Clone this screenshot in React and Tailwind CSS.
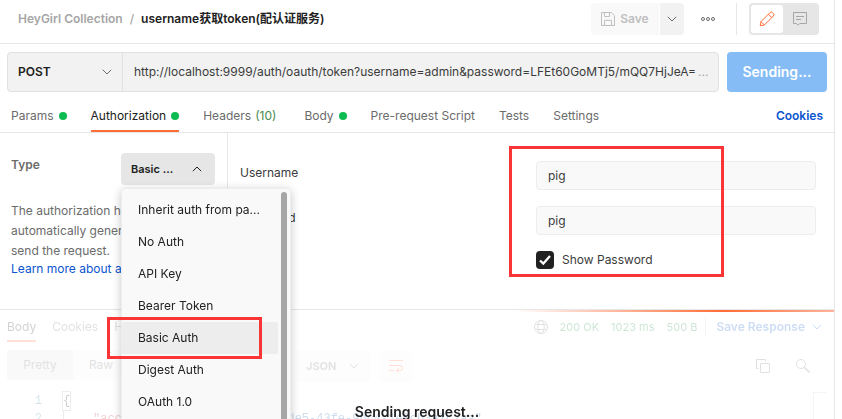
import React from "react";

const authTypes = [
  "Inherit auth from pa...",
  "No Auth",
  "API Key",
  "Bearer Token",
  "Basic Auth",
  "Digest Auth",
  "OAuth 1.0",
];

function Chevron({ up = false, className = "" }) {
  return (
    <svg viewBox="0 0 10 6" width="10" height="6" fill="none" stroke="currentColor" className={"pointer-events-none shrink-0 " + className} aria-hidden="true">
      <path d={up ? "M0.8 5.2 5 1l4.2 4.2" : "M0.8 0.8 5 5 9.2 0.8"} />
    </svg>
  );
}

function Dot() {
  return <span className="h-2 w-2 rounded-full bg-[#0cbb52]" />;
}

function Header() {
  return (
    <header className="flex h-11 shrink-0 items-start border-b border-[#e6e6e6] pt-[3px] pr-[15px] pl-[18px] font-semibold">
      <nav aria-label="Breadcrumb" className="flex h-8 flex-1 items-center gap-[7px] text-[#a6a6a6]">
        <a href="#collection">HeyGirl Collection</a>
        <span className="font-medium">/</span>
        <span className="text-[#212121]">username获取token(配认证服务)</span>
      </nav>
      <div className="flex h-8 items-center">
        <button type="button" disabled className="flex h-8 w-[68px] items-center justify-center gap-[5px] rounded-l bg-[#f9f9f9] text-[#bfbfbf]">
          <svg viewBox="0 0 14 14" width="14" height="14" fill="none" stroke="currentColor" aria-hidden="true">
            <path d="M.5.5h9.8l3.2 3.2v9.8H.5zM3.5.5v4h5v-4M3.5 13.5V8.3h7v5.2" />
          </svg>
          Save
        </button>
        <button type="button" aria-label="Save options" className="ml-px flex h-8 w-6 items-center justify-center rounded-r bg-[#f2f2f2] text-[#6b6b6b]">
          <Chevron />
        </button>
        <button type="button" aria-label="More actions" className="ml-[9px] flex h-8 w-[30px] items-center justify-center text-[#6b6b6b]">
          <svg viewBox="0 0 14 4" width="14" height="4" fill="none" stroke="currentColor" aria-hidden="true">
            <circle cx="2" cy="2" r="1.5" />
            <circle cx="7" cy="2" r="1.5" />
            <circle cx="12" cy="2" r="1.5" />
          </svg>
        </button>
        <span className="ml-[13px] h-8 w-px bg-[#e6e6e6]" />
        <div className="ml-3 flex h-8 w-[70px] rounded bg-[#e6e6e6] p-0.5">
          <button type="button" aria-label="Edit" className="flex w-8 items-center justify-center rounded-[3px] bg-white text-[#ff6c37]">
            <svg viewBox="0 0 16 16" width="16" height="16" fill="none" stroke="currentColor" strokeLinejoin="round" aria-hidden="true">
              <path d="M1.2 14.8 2 10.6 11 1.600a1.700 1.700 0 0 1 2.400 0l1 1a1.700 1.700 0 0 1 0 2.400l-9 9zM9.400 3.200l3.400 3.400M2 10.600 5.400 14" />
            </svg>
          </button>
          <button type="button" aria-label="Comments" className="flex flex-1 items-center justify-center text-[#a6a6a6]">
            <svg viewBox="0 0 14 14" width="14" height="14" fill="none" stroke="currentColor" aria-hidden="true">
              <path d="M.5.5h13v11H6.700L5 13.200 3.300 11.500H.5zM3 4.500h8M3 7.500h5" />
            </svg>
          </button>
        </div>
      </div>
    </header>
  );
}

function UrlBar() {
  return (
    <div className="flex shrink-0 gap-2 px-[7px] pt-2">
      <div className="flex h-10 min-w-0 flex-1 rounded border border-[#e1e1e1] bg-[#f2f2f2]">
        <div className="grid w-[115px] shrink-0 items-center border-r border-[#e1e1e1]">
          <select aria-label="Method" className="col-start-1 row-start-1 h-full w-full appearance-none pl-[10px] font-semibold text-[#212121] outline-none">
            <option>POST</option>
            <option>GET</option>
          </select>
          <Chevron className="col-start-1 row-start-1 mr-[10px] justify-self-end text-[#6b6b6b]" />
        </div>
        <input
          aria-label="Request URL"
          className="min-w-0 flex-1 pl-[11px] text-[#3b3b3b] outline-none"
          defaultValue="http://localhost:9999/auth/oauth/token?username=admin&password=LFEt60GoMTj5/mQQ7HjJeA="
        />
        <span className="flex w-5 items-center text-[#a6a6a6]">...</span>
      </div>
      <button type="button" className="h-10 w-[100px] rounded bg-[#85bcf6] text-sm font-semibold text-white">Sending...</button>
    </div>
  );
}

function Tabs() {
  const tab = "flex items-center gap-[5px]";
  return (
    <nav aria-label="Request sections" className="flex h-[41px] shrink-0 items-stretch gap-6 border-b border-[#e6e6e6] pt-2 pr-[11px] pl-[11px] text-[#6b6b6b]">
      <a href="#params" className={tab}>Params <Dot /></a>
      <a href="#authorization" aria-current="page" className="flex items-center gap-[5px] border-b-2 border-[#ff6c37] pt-0.5 text-[#212121]">Authorization <Dot /></a>
      <a href="#headers" className="mr-1 flex items-center gap-1">Headers <span className="text-[#468a4d]">(10)</span></a>
      <a href="#body" className={tab}>Body <Dot /></a>
      <a href="#pre-request" className={tab}>Pre-request Script</a>
      <a href="#tests" className={tab}>Tests</a>
      <a href="#settings" className={tab}>Settings</a>
      <a href="#cookies" className="ml-auto flex items-center font-semibold text-[#0a55cf]">Cookies</a>
    </nav>
  );
}

function AuthMenu() {
  return (
    <div className="absolute top-[35px] left-0 z-20 flex h-80 w-[170px] rounded border border-[#ededed] bg-[#f9f9f9] pt-[5px] shadow-[0_2px_10px_rgba(0,0,0,0.22)]">
      <ul role="listbox" aria-label="Authorization type" className="w-[156px] text-[#212121]">
        {authTypes.map((type) => (
          <li
            key={type}
            role="option"
            aria-selected={type === "Basic Auth"}
            className="flex h-8 items-center pl-4 aria-selected:bg-[#ededed]"
          >
            {type}
          </li>
        ))}
      </ul>
      <span className="-mt-0.5 ml-[3px] h-full w-1.5 rounded-full bg-[#a6a6a6]" />
    </div>
  );
}

function Authorization() {
  const field = "h-[29px] w-[280px] rounded border border-[#ededed] bg-[#f9f9f9] px-[11px] text-[#3b3b3b] outline-none";
  return (
    <section className="flex h-[177px] shrink-0 border-b border-[#e6e6e6]">
      <div className="w-[228px] shrink-0 border-r border-[#e6e6e6] pt-5 pr-3 pl-[11px] text-[#6b6b6b]">
        <div className="flex h-8 justify-between">
          <span id="type-label" className="pt-1 leading-4 font-semibold">Type</span>
          <div className="relative">
            <button type="button" aria-haspopup="listbox" aria-expanded="true" aria-labelledby="type-label" className="flex h-8 w-[94px] items-center justify-between rounded bg-[#e6e6e6] pr-[13px] pl-[10px] text-[11px] font-semibold text-[#212121]">
              Basic ...
              <Chevron up />
            </button>
            <AuthMenu />
          </div>
        </div>
        <p className="mt-4 leading-5">The authorization header will be automatically generated when you send the request.</p>
        <a href="#learn" className="block overflow-hidden leading-4 whitespace-nowrap text-[#0a55cf]">Learn more about authorization</a>
      </div>
      <div className="relative flex-1 pt-7 pr-[18px] pl-3">
        <div className="grid grid-cols-[1fr_280px] gap-y-4 text-[#3b3b3b]">
          <label htmlFor="username" className="pt-1 leading-4">Username</label>
          <input id="username" className={field} defaultValue="pig" />
          <label htmlFor="password" className="pt-1 leading-4">Password</label>
          <input id="password" className={field} defaultValue="pig" />
          <label className="col-start-2 flex h-[18px] items-center gap-2">
            <span className="grid h-[18px] w-[18px] place-items-center">
              <input type="checkbox" defaultChecked className="col-start-1 row-start-1 h-[18px] w-[18px] appearance-none rounded bg-[#212121]" />
              <svg viewBox="0 0 12 12" width="12" height="12" fill="none" stroke="white" strokeWidth="2.2" className="pointer-events-none col-start-1 row-start-1" aria-hidden="true">
                <path d="M1 6.500 4.300 9.600 11 2" />
              </svg>
            </span>
            Show Password
          </label>
        </div>
        <div className="pointer-events-none absolute top-[13px] right-[110px] h-[131px] w-[215px] border-3 border-[#fb3535]" />
      </div>
    </section>
  );
}

function Response() {
  return (
    <section className="relative min-h-0 flex-1">
      <div className="ml-auto h-0.5 w-[318px] bg-[linear-gradient(90deg,#ff6c3700,#ff6c37_65%,#ffb39a)]" />
      <div className="opacity-20">
        <div className="flex h-[30px] items-stretch pr-3 pl-[7px] text-[#6b6b6b]">
          <nav aria-label="Response sections" className="flex gap-4">
            <a href="#response-body" className="flex items-center border-b-2 border-[#ff6c37] pt-0.5 text-[#212121]">Body</a>
            <a href="#response-cookies" className="flex items-center">Cookies</a>
            <a href="#response-headers" className="flex items-center">Headers</a>
          </nav>
          <div className="ml-auto flex items-center gap-3 text-[11px] text-[#007f31]">
            <svg viewBox="0 0 14 14" width="14" height="14" fill="none" stroke="#6b6b6b" aria-hidden="true">
              <circle cx="7" cy="7" r="6.500" />
              <ellipse cx="7" cy="7" rx="3.200" ry="6.500" />
              <path d="M1.500 4.500h11M1.500 9.500h11" />
            </svg>
            <span>200 OK</span>
            <span>1023 ms</span>
            <span>500 B</span>
            <button type="button" className="-ml-1 flex h-5 items-center gap-[7px] border-l border-[#c8c8c8] pl-[10px] text-xs font-semibold text-[#0a55cf]">
              Save Response
              <Chevron />
            </button>
          </div>
        </div>
        <div className="mt-2 flex h-8 items-start pr-6 pl-[7px] text-[#6b6b6b]">
          <div className="flex h-[30px] w-[281px] rounded bg-[#f2f2f2]">
            <button type="button" className="w-[66px] rounded-l bg-[#e0e0e0]">Pretty</button>
            <button type="button" className="w-14">Raw</button>
            <button type="button" className="flex-1">Preview</button>
          </div>
          <div className="ml-2 grid h-8 w-[75px] items-center rounded bg-[#f2f2f2]">
            <select aria-label="Format" className="col-start-1 row-start-1 h-full w-full appearance-none pl-[10px] text-[11px] font-semibold outline-none">
              <option>JSON</option>
            </select>
            <Chevron className="col-start-1 row-start-1 mr-3 justify-self-end" />
          </div>
          <button type="button" aria-label="Wrap lines" className="ml-[9px] flex h-8 w-8 items-center justify-center rounded bg-[#f2f2f2] text-[#ff6c37]">
            <svg viewBox="0 0 14 14" width="14" height="14" fill="none" stroke="currentColor" aria-hidden="true">
              <path d="M0 1.500h14M0 6.500h11a2.500 2.500 0 0 1 0 5H8M0 11.500h5M10 9 7.500 11.500 10 14" />
            </svg>
          </button>
          <button type="button" aria-label="Copy" className="ml-auto flex h-8 items-center">
            <svg viewBox="0 0 14 14" width="14" height="14" fill="none" stroke="currentColor" aria-hidden="true">
              <rect x="4.500" y="4.500" width="9" height="9" rx=".5" />
              <path d="M2.500 9.500H.5v-9h9v2" />
            </svg>
          </button>
          <button type="button" aria-label="Search" className="ml-[26px] flex h-8 items-center">
            <svg viewBox="0 0 14 14" width="14" height="14" fill="none" stroke="currentColor" aria-hidden="true">
              <circle cx="5" cy="5" r="4.500" />
              <path d="m8.200 8.200 5.300 5.300" strokeWidth="1.600" />
            </svg>
          </button>
        </div>
        <div className="mt-[10px] flex justify-between">
          <pre className="font-['Liberation_Mono',monospace] text-xs leading-[18px]">
            <div className="flex"><span className="w-[63px] pr-[21px] text-right text-[#237893]">1</span><span className="outline outline-[#a6a6a6]">{"{"}</span></div>
            <div className="flex"><span className="w-[63px] pr-[21px] text-right text-[#237893]">2</span><span className="border-l border-[#a6a6a6] pl-[29px] text-[#a31515]">"access_token"</span><span>: </span><span className="text-[#0451a5]">"9cb7d04f-8de5-43fe-9bc4-1e0cb3a7c2aa"</span></div>
          </pre>
          <span className="mr-2 h-9 w-[13px] border-t border-l border-[#c8c8c8]" />
        </div>
      </div>
      <p className="absolute inset-x-0 top-[92px] text-center text-sm leading-5 font-semibold text-[#212121]">Sending request...</p>
      <div className="pointer-events-none absolute top-[7px] left-[107px] z-30 h-[42px] w-[155px] border-3 border-[#fb3535]" />
    </section>
  );
}

export default function App() {
  return (
    <div className="h-screen overflow-hidden bg-white pr-[7px] font-['Inter','Noto_Sans_CJK_SC',sans-serif] text-xs">
      <main className="flex h-full flex-col overflow-hidden border-r border-[#e6e6e6]">
        <Header />
        <UrlBar />
        <Tabs />
        <Authorization />
        <Response />
      </main>
    </div>
  );
}
